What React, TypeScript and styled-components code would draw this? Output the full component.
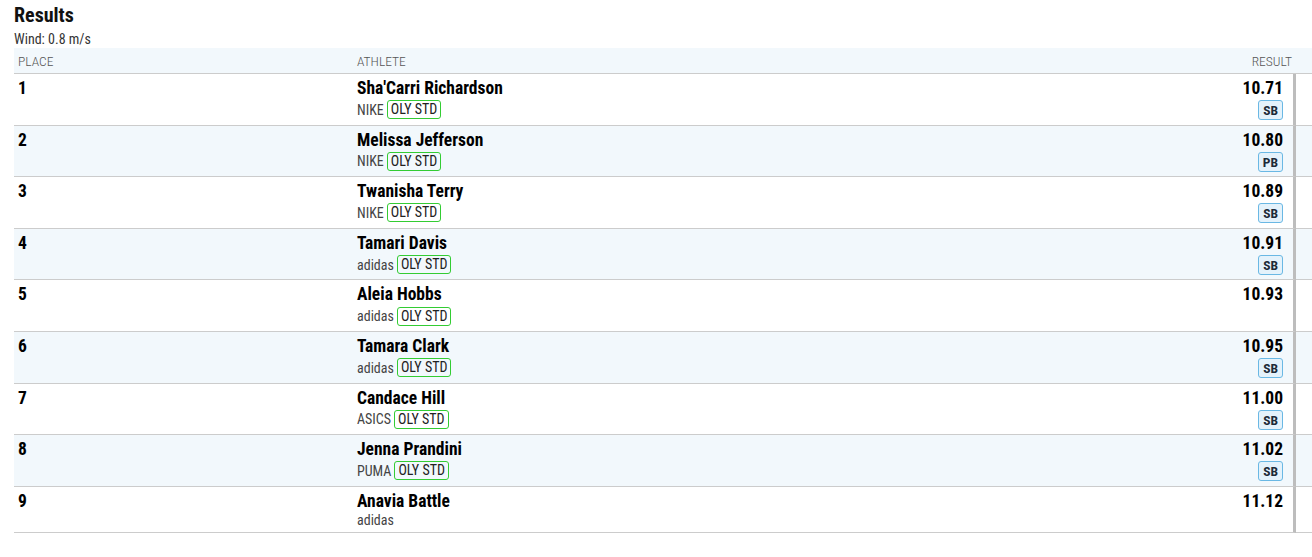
import React from "react";
import styled, { createGlobalStyle } from "styled-components";

const GlobalStyle = createGlobalStyle`
  * {
    box-sizing: border-box;
    margin: 0;
    padding: 0;
  }
  body {
    background: #ffffff;
    font-family: "Roboto Condensed", Roboto, "Liberation Sans", sans-serif;
    font-stretch: condensed;
    color: #111;
  }
`;

type Result = {
  place: number;
  name: string;
  team: string;
  oly: boolean;
  mark: string;
  badge?: "SB" | "PB";
};

const results: Result[] = [
  { place: 1, name: "Sha'Carri Richardson", team: "NIKE", oly: true, mark: "10.71", badge: "SB" },
  { place: 2, name: "Melissa Jefferson", team: "NIKE", oly: true, mark: "10.80", badge: "PB" },
  { place: 3, name: "Twanisha Terry", team: "NIKE", oly: true, mark: "10.89", badge: "SB" },
  { place: 4, name: "Tamari Davis", team: "adidas", oly: true, mark: "10.91", badge: "SB" },
  { place: 5, name: "Aleia Hobbs", team: "adidas", oly: true, mark: "10.93" },
  { place: 6, name: "Tamara Clark", team: "adidas", oly: true, mark: "10.95", badge: "SB" },
  { place: 7, name: "Candace Hill", team: "ASICS", oly: true, mark: "11.00", badge: "SB" },
  { place: 8, name: "Jenna Prandini", team: "PUMA", oly: true, mark: "11.02", badge: "SB" },
  { place: 9, name: "Anavia Battle", team: "adidas", oly: false, mark: "11.12" },
];

const Page = styled.div`
  padding: 3px 0 0 14px;
`;

const Title = styled.h2`
  font-size: 20px;
  font-weight: 700;
  line-height: 24px;
  color: #111;
`;

const Wind = styled.div`
  margin-top: 3px;
  font-size: 14px;
  line-height: 18px;
  color: #333;
`;

const Table = styled.div`
  display: grid;
  grid-template-columns: 339px 1fr auto 16px;
`;

const HeaderCell = styled.div<{ $align?: string }>`
  background: #f2f8fc;
  height: 26px;
  padding: 5px 4px 0;
  font-size: 13.5px;
  font-weight: 300;
  line-height: 17px;
  color: #555;
  text-transform: uppercase;
  text-align: ${(p) => p.$align ?? "left"};
  border-bottom: 1px solid #cccccc;
`;

const Cell = styled.div<{ $stripe: boolean }>`
  background: ${(p) => (p.$stripe ? "#f2f8fc" : "#ffffff")};
  border-bottom: 1px solid #cccccc;
  padding: 3px 4px 4px;
`;

const ResultCell = styled(Cell)`
  display: flex;
  flex-direction: column;
  align-items: flex-end;
  padding-right: 10px;
  border-right: 3px solid #bdbdbd;
  min-width: 80px;
`;

const Place = styled.div`
  font-size: 17.5px;
  font-weight: 700;
  line-height: 22px;
  color: #000;
`;

const Name = styled.div`
  font-size: 17.5px;
  font-weight: 700;
  line-height: 22px;
  color: #000;
`;

const Sub = styled.div`
  display: flex;
  align-items: center;
  gap: 3px;
  min-height: 16px;
  font-size: 14px;
  line-height: 16px;
  color: #444;
`;

const OlyBadge = styled.span`
  display: inline-block;
  margin: 1.3px 0;
  border: 1px solid #33cc33;
  border-radius: 3px;
  padding: 1px 3px;
  font-size: 14px;
  line-height: 15px;
  color: #222;
`;

const Mark = styled.div`
  font-size: 17.5px;
  font-weight: 700;
  line-height: 22px;
  color: #000;
`;

const RecordBadge = styled.span`
  display: inline-block;
  margin-top: 1px;
  background: #e4f2fb;
  border: 1px solid #6ab8e4;
  border-radius: 3px;
  padding: 1px 4px;
  font-size: 13.5px;
  font-weight: 700;
  line-height: 16px;
  color: #1d2b38;
`;

export default function App() {
  return (
    <>
      <GlobalStyle />
      <Page>
        <Title>Results</Title>
        <Wind>Wind: 0.8 m/s</Wind>
        <Table>
          <HeaderCell>Place</HeaderCell>
          <HeaderCell>Athlete</HeaderCell>
          <HeaderCell $align="right">Result</HeaderCell>
          <HeaderCell />
          {results.map((r) => {
            const stripe = r.place % 2 === 0;
            return (
              <React.Fragment key={r.place}>
                <Cell $stripe={stripe}>
                  <Place>{r.place}</Place>
                </Cell>
                <Cell $stripe={stripe}>
                  <Name>{r.name}</Name>
                  <Sub>
                    {r.team}
                    {r.oly && <OlyBadge>OLY STD</OlyBadge>}
                  </Sub>
                </Cell>
                <ResultCell $stripe={stripe}>
                  <Mark>{r.mark}</Mark>
                  {r.badge && <RecordBadge>{r.badge}</RecordBadge>}
                </ResultCell>
                <Cell $stripe={stripe} />
              </React.Fragment>
            );
          })}
        </Table>
      </Page>
    </>
  );
}
